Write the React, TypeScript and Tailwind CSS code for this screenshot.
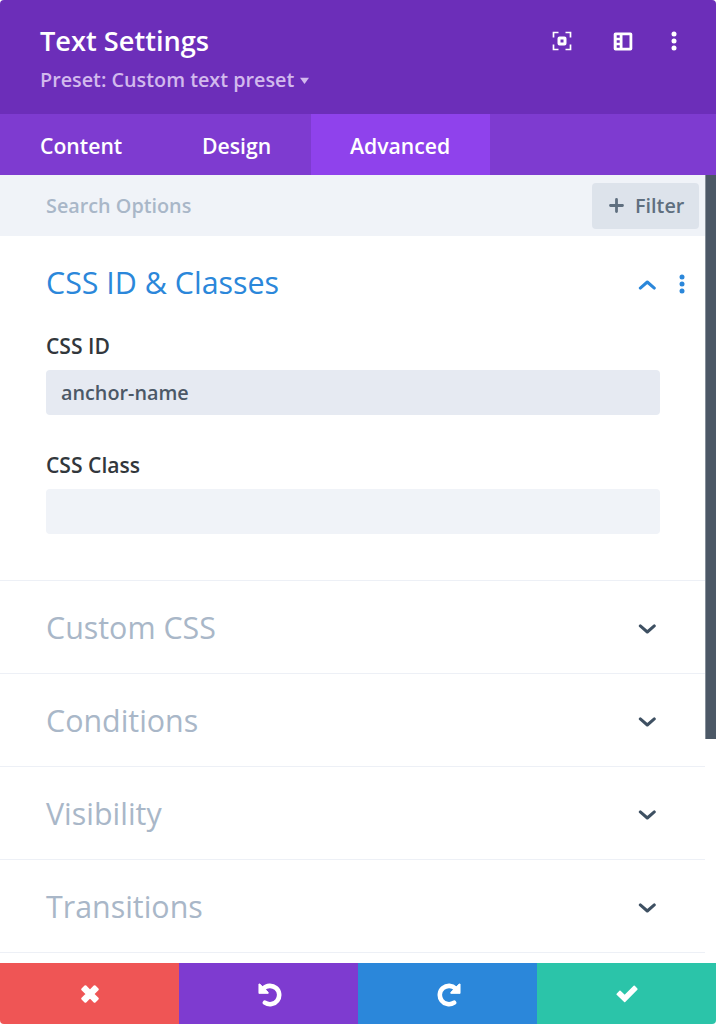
import React from "react";

const Chevron = ({ up = false }: { up?: boolean }) => (
  <svg
    width="18"
    height="10"
    viewBox="0 0 18 10"
    fill="none"
    stroke="currentColor"
    strokeWidth="3"
    strokeLinecap="round"
    strokeLinejoin="round"
  >
    <path d={up ? "M2.3 8.1 9.3 2l7 6.1" : "M2.3 1.9l7 6.1 7-6.1"} />
  </svg>
);

const Dots = () => (
  <svg width="6" height="20" viewBox="0 0 6 20" fill="currentColor">
    <circle cx="3" cy="3" r="2.5" />
    <circle cx="3" cy="10" r="2.5" />
    <circle cx="3" cy="17" r="2.5" />
  </svg>
);

const FocusIcon = () => (
  <svg width="20" height="20" viewBox="0 0 20 20" fill="none" stroke="currentColor">
    <path strokeWidth="1.7" d="M1.5 6.5v-5h5M13.5 1.5h5v5M18.5 13.5v5h-5M6.5 18.5h-5v-5" />
    <rect x="7" y="7" width="6" height="6" rx="0.5" strokeWidth="3" strokeLinejoin="round" />
  </svg>
);

const PanelIcon = () => (
  <svg width="20" height="19" viewBox="-.5 0 20 19">
    <path
      fill="currentColor"
      fillRule="evenodd"
      d="M2 .5h15A1.8 1.8 0 0 1 18.8 2.3v14.4A1.8 1.8 0 0 1 17 18.5H2A1.8 1.8 0 0 1 .2 16.7V2.3A1.8 1.8 0 0 1 2 .5ZM9 3.3v12.4h7V3.3ZM3.2 3.3v2.5h3V3.3ZM3.2 8.2v2.6h3V8.2ZM3.2 13.2v2.5h3v-2.5Z"
    />
  </svg>
);

const ArrowIcon = ({ redo = false }: { redo?: boolean }) => (
  <svg width="24" height="24" viewBox="0 0 24 24" className={redo ? "-scale-x-100" : undefined}>
    <path d="M.9 1 1.9 1 10.2 9.2v1.2H.9Z" fill="currentColor" stroke="currentColor" strokeWidth=".8" strokeLinejoin="round" />
    <path
      d="M5.4 5.6A9.2 9.2 0 1 1 6.9 19.7"
      fill="none"
      stroke="currentColor"
      strokeWidth="4.6"
      strokeLinecap="round"
    />
  </svg>
);

const sections = ["Custom CSS", "Conditions", "Visibility", "Transitions"];

export default function App() {
  return (
    <div className="flex h-[1024px] w-[716px] flex-col overflow-hidden rounded-[4px] bg-white font-['Open_Sans',sans-serif]">
      <header className="flex h-[114px] shrink-0 justify-between bg-[#6c2eb9] pl-10 text-white">
        <div className="pt-[23px]">
          <h1 className="text-[27.2px] leading-9 font-semibold">Text Settings</h1>
          <div className="mt-[7px] flex items-center gap-[6px] text-[19.8px] leading-7 font-semibold text-[#d2b9ed]">
            <span>Preset: Custom text preset</span>
            <svg width="9" height="7" viewBox="0 0 9 7" fill="currentColor">
              <path d="M0 .8h9L4.5 7Z" />
            </svg>
          </div>
        </div>
        <div className="flex h-[82px] items-center pr-[39px]">
          <FocusIcon />
          <span className="ml-[41px]"><PanelIcon /></span>
          <span className="ml-[38px]"><Dots /></span>
        </div>
      </header>

      <nav className="flex h-[61px] shrink-0 bg-[#7e3bd0] text-[21.2px] leading-[63px] font-semibold text-white">
        <span className="w-[162px] pl-10">Content</span>
        <span className="w-[149px] pl-10">Design</span>
        <span className="w-[179px] bg-[#8f42ec] pl-[39px]">Advanced</span>
      </nav>

      <div className="flex min-h-0 flex-1">
        <main className="min-w-0 flex-1 overflow-hidden">
          <div className="flex h-[61px] items-center justify-between bg-[#f0f3f8] pr-[6px] pl-[46px]">
            <span className="text-[19.8px] font-semibold text-[#a9b7c8]">Search Options</span>
            <button className="flex h-[46px] w-[107px] items-center gap-[11px] rounded-[4px] bg-[#dde3eb] pl-[17px] text-[19.8px] font-semibold text-[#5f6f7f]">
              <svg width="15" height="15" viewBox="0 0 15 15" stroke="currentColor" strokeWidth="2.8" strokeLinecap="round">
                <path d="M7.5 1.5v12M1.5 7.5h12" />
              </svg>
              Filter
            </button>
          </div>

          <section className="h-[345px] border-b border-[#edf0f6] pl-[46px]">
            <div className="flex h-[96px] items-center justify-between pr-5 text-[#2b87da]">
              <h2 className="pb-[3px] text-[30.4px]">CSS ID &amp; Classes</h2>
              <div className="flex items-center gap-[23px]">
                <span className="pt-[2px]"><Chevron up /></span>
                <Dots />
              </div>
            </div>
            <label className="block h-[38px] text-[21.1px] leading-7 font-semibold text-[#32373c]">CSS ID</label>
            <div className="h-[45px] w-[613.5px] rounded-[4px] bg-[#e6eaf2] pl-[15px] text-[19.8px] leading-[45px] font-semibold text-[#4c5866]">
              anchor-name
            </div>
            <label className="mt-[36px] block h-[38px] text-[21.1px] leading-7 font-semibold text-[#32373c]">CSS Class</label>
            <div className="h-[45px] w-[613.5px] rounded-[4px] bg-[#f0f3f8]" />
          </section>

          {sections.map((name) => (
            <div
              key={name}
              className="flex h-[93px] items-center justify-between border-b border-[#edf0f6] pr-[49px] pl-[46px] text-[#3e5062]"
            >
              <h2 className="pt-[1px] text-[30.4px] text-[#a9b7c8]">{name}</h2>
              <span className="pt-[3px]"><Chevron /></span>
            </div>
          ))}
        </main>
        <div className="h-[564px] w-[11px] border-l border-[#87909a] bg-[#4c5866]" />
      </div>

      <footer className="grid h-[61px] shrink-0 grid-cols-4 text-white">
        <button className="flex items-center justify-center bg-[#ef5555]">
          <svg width="20" height="20" viewBox="0 0 20 20" stroke="currentColor" strokeLinejoin="round" strokeWidth="2.4" fill="currentColor">
            <path d="M5.4 2.4 10 7l4.6-4.6 3 3L13 10l4.6 4.6-3 3L10 13l-4.6 4.6-3-3L7 10 2.4 5.4Z" />
          </svg>
        </button>
        <button className="flex items-center justify-center bg-[#7e3bd0] pt-[2px] pl-[2px]"><ArrowIcon /></button>
        <button className="flex items-center justify-center bg-[#2b87da] pt-[2px] pl-[2px]"><ArrowIcon redo /></button>
        <button className="flex items-center justify-center bg-[#2bc4a9]">
          <svg width="22" height="18" viewBox="0 0 22 18" fill="currentColor" stroke="currentColor" strokeWidth="1.6" strokeLinejoin="round">
            <path d="M1.2 9.2 4 6.4l4.7 4.5L18.2 1.4l2.6 2.7L8.7 16.4Z" />
          </svg>
        </button>
      </footer>
    </div>
  );
}
